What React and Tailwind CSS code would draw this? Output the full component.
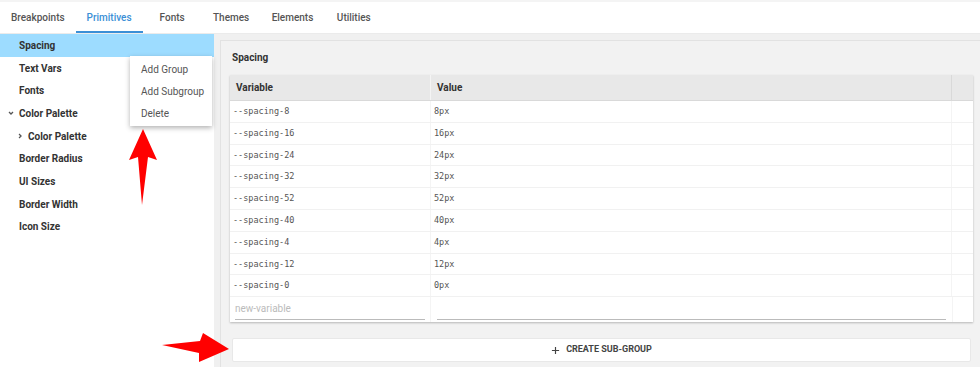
const tabs = ['Breakpoints', 'Primitives', 'Fonts', 'Themes', 'Elements', 'Utilities']

const rows = [
  ['--spacing-8', '8px'],
  ['--spacing-16', '16px'],
  ['--spacing-24', '24px'],
  ['--spacing-32', '32px'],
  ['--spacing-52', '52px'],
  ['--spacing-40', '40px'],
  ['--spacing-4', '4px'],
  ['--spacing-12', '12px'],
  ['--spacing-0', '0px'],
]

function Chevron({ dir }) {
  return (
    <svg viewBox="0 0 10 10" className="h-[8px] w-[8px] text-[#555]" fill="none" stroke="currentColor" strokeWidth="1.6">
      {dir === 'down' ? <path d="M2.5 3.8 5 6.3 7.5 3.8" /> : <path d="M3.8 2.5 6.3 5 3.8 7.5" />}
    </svg>
  )
}

function SideItem({ label, active, chevron, indent }) {
  return (
    <div
      className={`flex h-[22.7px] items-center text-[10px] font-bold text-[#333] ${active ? 'bg-[#9ddcff]' : ''} ${indent ? 'pl-[16px]' : chevron ? 'pl-[7px]' : 'pl-[19px]'}`}
    >
      {chevron && <span className="mr-[4px] flex w-[8px] justify-center"><Chevron dir={chevron} /></span>}
      {label}
    </div>
  )
}

// annotation arrows drawn over the screenshot
function Arrows() {
  return (
    <svg className="pointer-events-none absolute left-0 top-0" width="980" height="367">
      <polygon points="143,129 157,160 148,157 142,205 138,157 129,160" fill="#ff0000" />
      <polygon points="229,349 203,333 200,341 162,345 199,353 199,362" fill="#ff0000" />
    </svg>
  )
}

export default function App() {
  return (
    <div className="relative h-[367px] w-[980px] overflow-hidden bg-[#f0f0f0] font-['Roboto',sans-serif]">
      <div className="h-[2px] bg-[#f4f4f4]" />
      <div className="flex h-[32px] items-stretch border-b border-[#ebebeb] bg-white">
        {tabs.map((t) => (
          <div
            key={t}
            className={`flex min-w-[59px] items-center justify-center border-b-2 px-[11px] pt-[2px] text-[10px] font-medium ${t === 'Primitives' ? 'border-[#3b8fd6] text-[#3b8fd6]' : 'border-transparent text-[#555]'}`}
          >
            {t}
          </div>
        ))}
      </div>
      <div className="flex h-[333px]">
        <div className="w-[214px] shrink-0 bg-white">
          <SideItem label="Spacing" active />
          <SideItem label="Text Vars" />
          <SideItem label="Fonts" />
          <SideItem label="Color Palette" chevron="down" />
          <SideItem label="Color Palette" chevron="right" indent />
          <SideItem label="Border Radius" />
          <SideItem label="UI Sizes" />
          <SideItem label="Border Width" />
          <SideItem label="Icon Size" />
        </div>
        <div className="ml-[6px] mt-[6px] flex-1 border-l border-t border-[#e2e2e2] bg-[#f2f2f2] pl-[9px] pr-[7px]">
          <div className="pb-[10px] pl-[2px] pt-[9px] text-[10px] font-bold text-[#333]">Spacing</div>
          <div className="bg-white shadow-[0_1px_2px_rgba(0,0,0,0.25)]">
            <div className="flex h-[26px] border-b border-[#d9d9d9] bg-[#e8e8e8] text-[10px] font-bold text-[#333]">
              <div className="flex w-[201px] items-center border-r border-[#f4f4f4] pl-[6px]">Variable</div>
              <div className="flex flex-1 items-center border-r border-[#d9d9d9] pl-[6px]">Value</div>
              <div className="w-[21px]" />
            </div>
            {rows.map(([k, v]) => (
              <div key={k} className="flex h-[21.8px] border-b border-[#f1f1f1] font-['DejaVu_Sans_Mono',monospace] text-[8.5px] text-[#555]">
                <div className="flex w-[201px] items-center border-r border-[#f4f4f4] pl-[3px]">{k}</div>
                <div className="flex flex-1 items-center border-r border-[#f4f4f4] pl-[3px]">{v}</div>
                <div className="w-[21px]" />
              </div>
            ))}
            <div className="flex h-[25px] text-[10px]">
              <div className="flex w-[201px] items-end border-r border-[#f4f4f4] px-[5px] pb-[2px]">
                <div className="w-full border-b border-[#bbb] pb-[3px] text-[#bbb]">new-variable</div>
              </div>
              <div className="flex flex-1 items-end px-[6px] pb-[2px]">
                <div className="h-[1px] w-full bg-[#bbb]" />
              </div>
              <div className="w-[21px] border-l border-[#f4f4f4]" />
            </div>
          </div>
          <div className="ml-[2px] mr-[2px] mt-[16px] flex h-[24px] items-center justify-center gap-[6px] rounded-[2px] border border-[#e8e8e8] bg-white text-[9px] font-bold text-[#444]">
            <svg viewBox="0 0 10 10" className="h-[9px] w-[9px]" stroke="#444" strokeWidth="1.3">
              <path d="M5 1v8M1 5h8" />
            </svg>
            CREATE SUB-GROUP
          </div>
        </div>
      </div>
      <div className="absolute left-[130px] top-[56px] w-[82px] bg-white py-[2px] text-[10px] text-[#555] shadow-[0_2px_5px_rgba(0,0,0,0.3)]">
        <div className="flex h-[22px] items-center pl-[11px]">Add Group</div>
        <div className="flex h-[22px] items-center pl-[11px]">Add Subgroup</div>
        <div className="flex h-[22px] items-center pl-[11px]">Delete</div>
      </div>
      <Arrows />
    </div>
  )
}
